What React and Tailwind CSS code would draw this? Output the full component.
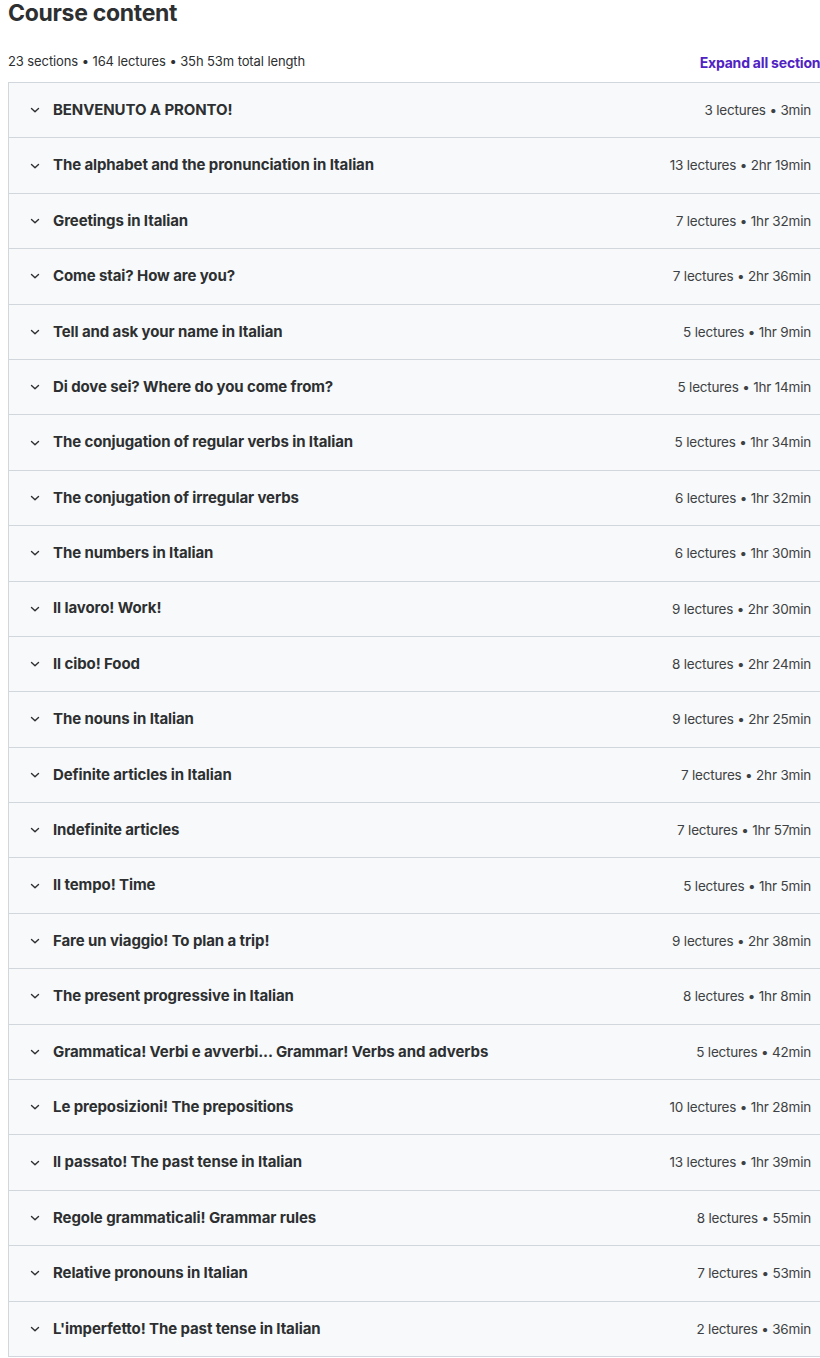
import React from "react";

const sections = [
  ["BENVENUTO A PRONTO!", "3 lectures • 3min"],
  ["The alphabet and the pronunciation in Italian", "13 lectures • 2hr 19min"],
  ["Greetings in Italian", "7 lectures • 1hr 32min"],
  ["Come stai? How are you?", "7 lectures • 2hr 36min"],
  ["Tell and ask your name in Italian", "5 lectures • 1hr 9min"],
  ["Di dove sei? Where do you come from?", "5 lectures • 1hr 14min"],
  ["The conjugation of regular verbs in Italian", "5 lectures • 1hr 34min"],
  ["The conjugation of irregular verbs", "6 lectures • 1hr 32min"],
  ["The numbers in Italian", "6 lectures • 1hr 30min"],
  ["Il lavoro! Work!", "9 lectures • 2hr 30min"],
  ["Il cibo! Food", "8 lectures • 2hr 24min"],
  ["The nouns in Italian", "9 lectures • 2hr 25min"],
  ["Definite articles in Italian", "7 lectures • 2hr 3min"],
  ["Indefinite articles", "7 lectures • 1hr 57min"],
  ["Il tempo! Time", "5 lectures • 1hr 5min"],
  ["Fare un viaggio! To plan a trip!", "9 lectures • 2hr 38min"],
  ["The present progressive in Italian", "8 lectures • 1hr 8min"],
  ["Grammatica! Verbi e avverbi... Grammar! Verbs and adverbs", "5 lectures • 42min"],
  ["Le preposizioni! The prepositions", "10 lectures • 1hr 28min"],
  ["Il passato! The past tense in Italian", "13 lectures • 1hr 39min"],
  ["Regole grammaticali! Grammar rules", "8 lectures • 55min"],
  ["Relative pronouns in Italian", "7 lectures • 53min"],
  ["L'imperfetto! The past tense in Italian", "2 lectures • 36min"],
];

function Chevron() {
  return (
    <svg width="12" height="12" viewBox="0 0 12 12" className="shrink-0">
      <path d="M2.5 4.5 L6 7.8 L9.5 4.5" fill="none" stroke="#2d2f31" strokeWidth="1.4" strokeLinecap="round" strokeLinejoin="round" />
    </svg>
  );
}

export default function App() {
  return (
    <div
      className="w-[836px] bg-white pl-2 text-[#2d2f31] overflow-hidden"
      style={{ fontFamily: "Inter, 'Noto Sans', sans-serif" }}
    >
      <h2 className="text-[23px] leading-[26px] font-bold tracking-[-0.3px] text-[#2d2f31]">
        Course content
      </h2>
      <div className="flex items-center justify-between mt-[27px] h-[18px] pr-2">
        <span className="text-[13px] text-[#2d2f31] tracking-[-0.1px]">
          23 sections • 164 lectures • 35h 53m total length
        </span>
        <span className="text-[14px] font-bold text-[#5022c3] tracking-[-0.2px] whitespace-nowrap">
          Expand all sections
        </span>
      </div>
      <div className="mt-[11px] border border-[#d1d7dc] border-b-0 w-[828px]">
        {sections.map(([t, m], i) => (
          <div
            key={i}
            className="h-[55.4px] flex items-center justify-between bg-[#f7f9fa] border-b border-[#d1d7dc] pl-[20px] pr-[24px]"
          >
            <div className="flex items-center gap-[12px]">
              <Chevron />
              <span className="text-[15px] font-bold tracking-[-0.1px]">{t}</span>
            </div>
            <span className="text-[13.5px] text-[#3e4143] tracking-[-0.2px]">{m}</span>
          </div>
        ))}
      </div>
    </div>
  );
}
